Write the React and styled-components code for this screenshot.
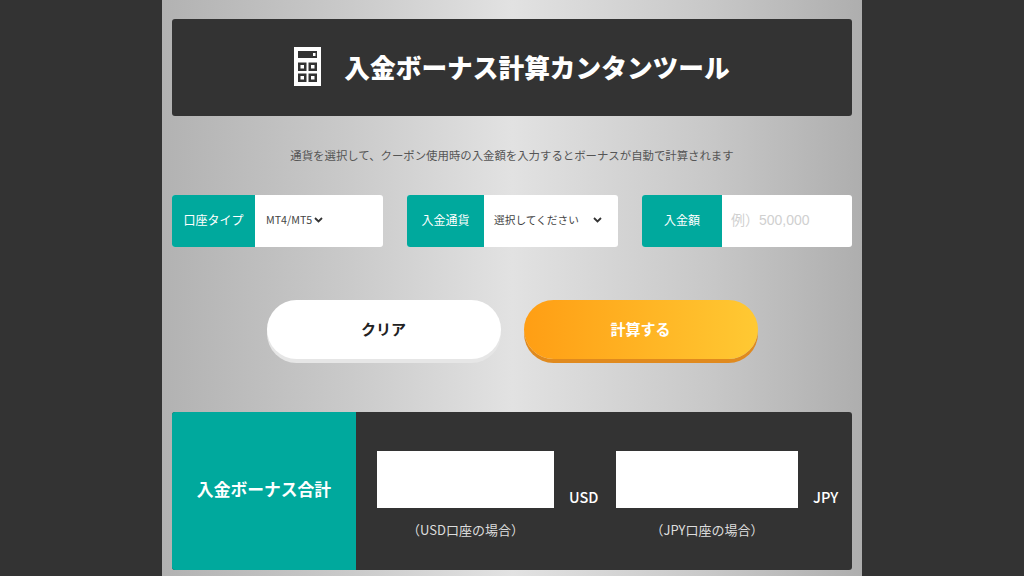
import styled, { createGlobalStyle } from 'styled-components';

const FONT = `'Noto Sans CJK JP', 'Noto Sans', sans-serif`;

const App = () => {
  return (
    <Page>
      <GlobalStyle />
      <Panel>
        <Header>
          <CalcIcon />
          <h1>入金ボーナス計算カンタンツール</h1>
        </Header>

        <Lead>通貨を選択して、クーポン使用時の入金額を入力するとボーナスが自動で計算されます</Lead>

        <FieldRow>
          <Field>
            <FieldLabel width={83}>口座タイプ</FieldLabel>
            <SelectValue pad={11} gap={2}>
              MT4/MT5
              <Chevron />
            </SelectValue>
          </Field>
          <Field>
            <FieldLabel width={77}>入金通貨</FieldLabel>
            <SelectValue pad={10} gap={14}>
              選択してください
              <Chevron />
            </SelectValue>
          </Field>
          <Field>
            <FieldLabel width={80}>入金額</FieldLabel>
            <AmountInput placeholder="例）500,000" />
          </Field>
        </FieldRow>

        <ButtonRow>
          <ActionBtn type="button">クリア</ActionBtn>
          <ActionBtn type="button" primary>
            計算する
          </ActionBtn>
        </ButtonRow>

        <Result>
          <ResultTitle>入金ボーナス合計</ResultTitle>
          <ResultBody>
            <Amount boxWidth={177} unitWidth={62}>
              <AmountLine>
                <AmountBox />
                <Unit>USD</Unit>
              </AmountLine>
              <Caption>（USD口座の場合）</Caption>
            </Amount>
            <Amount boxWidth={182} unitWidth={54}>
              <AmountLine>
                <AmountBox />
                <Unit>JPY</Unit>
              </AmountLine>
              <Caption>（JPY口座の場合）</Caption>
            </Amount>
          </ResultBody>
        </Result>
      </Panel>
    </Page>
  );
};

export default App;

const CalcIcon = () => (
  <svg width="27" height="39" viewBox="0 0 27 39" aria-hidden="true">
    <path
      fill="#fff"
      fillRule="evenodd"
      d="M0 0h27v39H0zM4 4v7h19V4zM4 15.500v8.500h8.500v-8.500zM14.500 15.500v8.500H23v-8.500zM4 26.500V35h8.500v-8.500zM14.500 26.500V35H23v-8.500z"
    />
    <path
      fill="#fff"
      d="M19 6h2.500v3H19zM6.500 18h3.500v3.500H6.500zM17 18h3.500v3.500H17zM6.500 29h3.500v3.500H6.500zM17 29h3.500v3.500H17z"
    />
  </svg>
);

const Chevron = () => (
  <svg width="9" height="6" viewBox="0 0 9 6" aria-hidden="true">
    <path d="M1 1l3.500 3.500L8 1" fill="none" stroke="#333" strokeWidth="1.800" />
  </svg>
);

const GlobalStyle = createGlobalStyle`
  html, body {
    margin: 0;
    padding: 0;
    background: #333;
    overflow: hidden;
  }

  h1 {
    margin: 0;
  }
`;

const Page = styled.div`
  width: 1024px;
  height: 576px;
  background: #333;
  display: flex;
  justify-content: center;
  font-family: ${FONT};
  overflow: hidden;
`;

const Panel = styled.main`
  width: 680px;
  height: 576px;
  padding: 19px 10px 0;
  background: linear-gradient(90deg, #b2b2b2 0%, #c8c8c8 25%, #e2e2e2 50%, #c8c8c8 78%, #aeaeae 100%);
  display: flex;
  flex-direction: column;
`;

const Header = styled.header`
  height: 97px;
  flex: none;
  background: #333;
  border-radius: 3px;
  display: flex;
  align-items: center;
  justify-content: center;
  gap: 23px;
  padding-bottom: 2px;
  box-sizing: border-box;

  h1 {
    color: #fff;
    font-size: 25.700px;
    font-weight: 900;
    line-height: 1;
    white-space: nowrap;
  }
`;

const Lead = styled.p`
  margin: 30px 0 0;
  height: 18px;
  line-height: 18px;
  text-align: center;
  font-size: 11.400px;
  color: #555;
  white-space: nowrap;
`;

const FieldRow = styled.div`
  margin-top: 31px;
  display: grid;
  grid-template-columns: 211px 211px 210px;
  column-gap: 24px;
`;

const Field = styled.div`
  height: 52px;
  display: flex;
  background: #fff;
  border-radius: 3px;
  overflow: hidden;
`;

const FieldLabel = styled.div`
  width: ${(props) => props.width}px;
  flex: none;
  box-sizing: border-box;
  padding-bottom: 3px;
  background: #00a99d;
  color: #fff;
  font-size: 12px;
  display: flex;
  align-items: center;
  justify-content: center;
  white-space: nowrap;
`;

const SelectValue = styled.div`
  flex: 1;
  padding: 0 0 3px ${(props) => props.pad}px;
  display: flex;
  align-items: center;
  gap: ${(props) => props.gap}px;
  font-size: 10.700px;
  color: #444;
  white-space: nowrap;
`;

const AmountInput = styled.input`
  flex: 1;
  min-width: 0;
  border: 0;
  outline: 0;
  padding: 0 0 3px 9px;
  font-family: 'Liberation Sans', ${FONT};
  font-size: 14px;
  background: transparent;

  &::placeholder {
    color: #d0d0d0;
    opacity: 1;
  }
`;

const ButtonRow = styled.div`
  margin-top: 53px;
  display: flex;
  justify-content: center;
  gap: 23px;
`;

const ActionBtn = styled.button`
  width: 234px;
  height: 59px;
  border: 0;
  border-radius: 30px;
  padding: 0 0 3px;
  font-family: ${FONT};
  font-size: 15px;
  font-weight: 700;
  cursor: pointer;
  color: ${(props) => (props.primary ? '#fff' : '#222')};
  background: ${(props) => (props.primary ? 'linear-gradient(90deg, #ff9e14, #ffc933)' : '#fff')};
  box-shadow: 0 4px 0 ${(props) => (props.primary ? '#e08a1e' : '#e6e6e6')};
`;

const Result = styled.section`
  margin-top: 53px;
  height: 158px;
  display: flex;
  border-radius: 3px;
  overflow: hidden;
  background: #333;
`;

const ResultTitle = styled.h2`
  margin: 0;
  width: 184px;
  flex: none;
  box-sizing: border-box;
  padding-bottom: 4px;
  background: #00a99d;
  color: #fff;
  font-size: 16.800px;
  font-weight: 700;
  display: flex;
  align-items: center;
  justify-content: center;
  white-space: nowrap;
`;

const ResultBody = styled.div`
  flex: 1;
  padding: 39px 0 0 21px;
  display: flex;
`;

const Amount = styled.div`
  width: ${(props) => props.boxWidth + props.unitWidth}px;
  --box-width: ${(props) => props.boxWidth}px;
`;

const AmountLine = styled.div`
  display: flex;
  align-items: flex-end;
`;

const AmountBox = styled.div`
  width: var(--box-width);
  height: 57px;
  background: #fff;
  flex: none;
`;

const Unit = styled.span`
  margin: 0 0 4px 15px;
  color: #fff;
  font-size: 14.500px;
  font-weight: 500;
  line-height: 1;
  white-space: nowrap;
`;

const Caption = styled.p`
  width: var(--box-width);
  margin: 13px 0 0;
  text-align: center;
  color: #ddd;
  font-size: 13px;
  line-height: 18px;
  white-space: nowrap;
`;
